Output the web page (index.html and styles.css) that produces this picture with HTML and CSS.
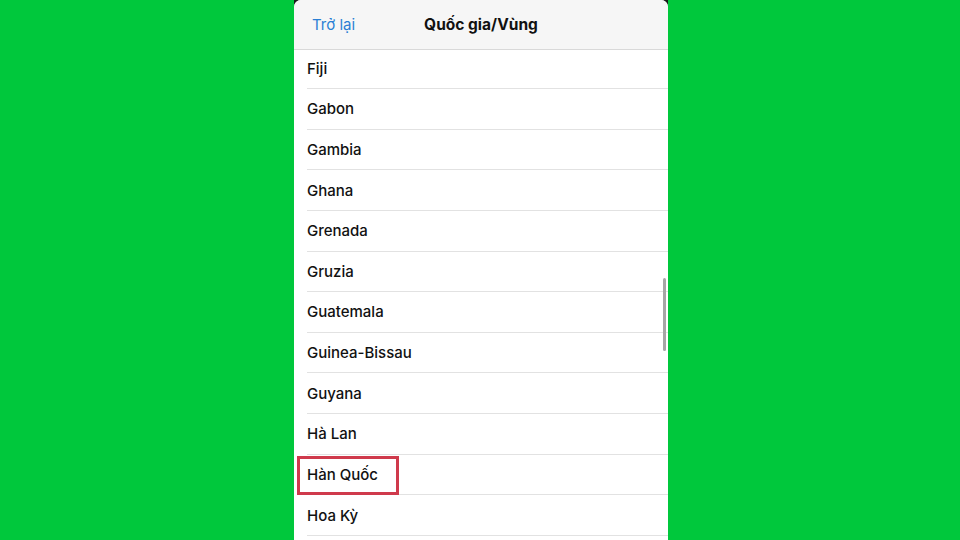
FILE: index.html
```html
<!DOCTYPE html>
<html lang="vi">

<head>
    <meta charset="utf-8">
    <meta name="viewport" content="width=device-width, initial-scale=1.0">
    <title>Quốc gia/Vùng</title>
    <link rel="stylesheet" href="styles.css">
</head>

<body>
    <div class="phone">
        <section class="sheet">
            <header class="topbar">
                <a class="back">Trở lại</a>
                <h1>Quốc gia/Vùng</h1>
                <span></span>
            </header>

            <ul class="list">
                <li>Fiji</li>
                <li>Gabon</li>
                <li>Gambia</li>
                <li>Ghana</li>
                <li>Grenada</li>
                <li>Gruzia</li>
                <li>Guatemala</li>
                <li>Guinea-Bissau</li>
                <li>Guyana</li>
                <li>Hà Lan</li>
                <li class="chon">Hàn Quốc<span class="khung"></span></li>
                <li>Hoa Kỳ</li>
            </ul>
        </section>
        <div class="scroll"></div>
    </div>
</body>

</html>
```

FILE: styles.css
```css
* {
    box-sizing: border-box;
}

body {
    margin: 0;
    padding-left: 2px;
    background: #00c83c;
    display: flex;
    justify-content: center;
    font-family: Inter, "Noto Sans", sans-serif;
}

.phone {
    position: relative;
    width: 374px;
    height: 540px;
    overflow: hidden;
    background: #1b1b1b;
}

.sheet {
    height: 100%;
    background: #fff;
    border-radius: 7px 7px 0 0;
    overflow: hidden;
}

.topbar {
    height: 50px;
    display: grid;
    grid-template-columns: 1fr auto 1fr;
    align-items: center;
    background: #f6f6f6;
    border-bottom: 1px solid #d9d9d9;
    padding: 0 18px;
}

.back {
    color: #2a7fd4;
    font-size: 15px;
}

h1 {
    margin: 0;
    font-size: 15.5px;
    font-weight: 700;
    color: #111;
}

.list {
    list-style: none;
    margin: -1.6px 0 0;
    padding: 0;
}

.list li {
    position: relative;
    height: 40.64px;
    margin-left: 13px;
    display: flex;
    align-items: center;
    border-bottom: 1px solid #e2e2e2;
    font-size: 15px;
    font-weight: 550;
    color: #111;
}

.khung {
    position: absolute;
    left: -10px;
    top: 1px;
    width: 102px;
    height: 39px;
    border: 3px solid #cf3a4c;
}

.scroll {
    position: absolute;
    right: 2px;
    top: 278px;
    width: 3px;
    height: 73px;
    border-radius: 2px;
    background: #a6a6a6;
}
```
